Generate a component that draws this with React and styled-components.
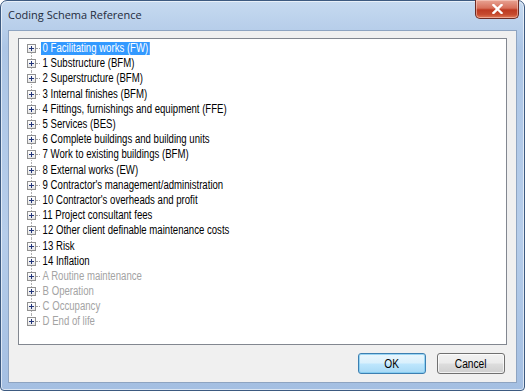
import React from 'react'
import styled, { createGlobalStyle } from 'styled-components'

const GlobalStyle = createGlobalStyle`
  html, body { margin: 0; padding: 0; background: #ffffff; }
  body { width: 525px; height: 391px; overflow: hidden; }
`

const items = [
  { label: '0 Facilitating works (FW)', selected: true },
  { label: '1 Substructure (BFM)' },
  { label: '2 Superstructure (BFM)' },
  { label: '3 Internal finishes (BFM)' },
  { label: '4 Fittings, furnishings and equipment (FFE)' },
  { label: '5 Services (BES)' },
  { label: '6 Complete buildings and building units' },
  { label: '7 Work to existing buildings (BFM)' },
  { label: '8 External works (EW)' },
  { label: "9 Contractor's management/administration" },
  { label: "10 Contractor's overheads and profit" },
  { label: '11 Project consultant fees' },
  { label: '12 Other client definable maintenance costs' },
  { label: '13 Risk' },
  { label: '14 Inflation' },
  { label: 'A Routine maintenance', disabled: true },
  { label: 'B Operation', disabled: true },
  { label: 'C Occupancy', disabled: true },
  { label: 'D End of life', disabled: true },
]

const Window = styled.div`
  width: 525px;
  height: 391px;
  box-sizing: border-box;
  display: flex;
  flex-direction: column;
  border: 1px solid #3d5a80;
  border-radius: 7px 7px 4px 4px;
  background: linear-gradient(180deg, #c6daf0 0%, #adc6e6 12%, #b6cdea 60%, #a4bfe2 100%);
  box-shadow: inset 0 0 0 1px rgba(255, 255, 255, 0.6);
  font-family: 'Liberation Sans', Arial, sans-serif;
`

const TitleBar = styled.div`
  height: 29px;
  display: flex;
  justify-content: space-between;
  align-items: flex-start;
  padding-left: 7px;
`

const Title = styled.div`
  font-family: 'Open Sans', 'Noto Sans', sans-serif;
  font-size: 11px;
  line-height: 28px;
  color: #1e2b3c;
`

const CloseButton = styled.div`
  width: 44px;
  height: 19px;
  margin-right: 5px;
  margin-top: -1px;
  box-sizing: border-box;
  border: 1px solid #6d2b23;
  border-top: none;
  border-radius: 0 0 5px 5px;
  background: linear-gradient(180deg, #e8a394 0%, #d7705b 45%, #bd3a22 55%, #c64a2e 80%, #e07a58 100%);
  box-shadow: inset 0 0 0 1px rgba(255, 220, 210, 0.5);
  display: flex;
  align-items: center;
  justify-content: center;
`

const Client = styled.div`
  flex: 1;
  margin: 0 7px 7px 7px;
  box-sizing: border-box;
  background: #f0f0f0;
  border: 1px solid #8ea4c1;
  display: flex;
  flex-direction: column;
  padding: 7px 9px 0 9px;
`

const TreeBox = styled.div`
  height: 307px;
  box-sizing: border-box;
  background: #ffffff;
  border: 1px solid #828790;
  padding-top: 2px;
`

const Row = styled.div`
  position: relative;
  height: 15.2px;
  display: flex;
  align-items: center;
  padding-left: 8px;

  &::before {
    content: '';
    position: absolute;
    left: 12px;
    top: ${({ $first }) => ($first ? '50%' : '0')};
    bottom: ${({ $last }) => ($last ? '50%' : '0')};
    border-left: 1px dotted #b0b0b0;
  }
`

const Expander = styled.div`
  position: relative;
  z-index: 1;
  width: 9px;
  height: 9px;
  box-sizing: border-box;
  border: 1px solid #919191;
  background: linear-gradient(180deg, #ffffff 0%, #e6e6e6 100%);
  display: flex;
  align-items: center;
  justify-content: center;
`

const Plus = styled.div`
  position: relative;
  width: 5px;
  height: 1px;
  background: #22357a;

  &::after {
    content: '';
    position: absolute;
    left: 2px;
    top: -2px;
    width: 1px;
    height: 5px;
    background: #22357a;
  }
`

const Connector = styled.div`
  width: 4px;
  border-top: 1px dotted #a0a0a0;
`

const Label = styled.span`
  font-size: 12px;
  line-height: 13px;
  padding: 0 2px;
  margin-left: 1px;
  white-space: nowrap;
  transform: scaleX(0.8);
  transform-origin: left center;
  color: ${({ $selected, $disabled }) => ($selected ? '#ffffff' : $disabled ? '#a3a3a3' : '#000000')};
  background: ${({ $selected }) => ($selected ? '#3399ff' : 'transparent')};
`

const Footer = styled.div`
  flex: 1;
  display: flex;
  justify-content: flex-end;
  align-items: flex-start;
  gap: 11px;
  padding-top: 8px;
  padding-right: 2px;
`

const Button = styled.div`
  width: 68px;
  height: 21px;
  box-sizing: border-box;
  border: 1px solid ${({ $default }) => ($default ? '#3c7fb1' : '#707070')};
  border-radius: 3px;
  background: ${({ $default }) =>
    $default
      ? 'linear-gradient(180deg, #eaf6fd 0%, #d9f0fc 48%, #bee6fd 52%, #a7d9f5 100%)'
      : 'linear-gradient(180deg, #f2f2f2 0%, #ebebeb 48%, #dddddd 52%, #cfcfcf 100%)'};
  box-shadow: inset 0 0 0 1px ${({ $default }) => ($default ? 'rgba(120, 200, 240, 0.7)' : 'rgba(255, 255, 255, 0.7)')};
  display: flex;
  align-items: center;
  justify-content: center;
`

const ButtonText = styled.span`
  font-size: 12px;
  transform: scaleX(0.85);
  color: #000000;
`

export default function App() {
  return (
    <>
      <GlobalStyle />
      <Window>
        <TitleBar>
          <Title>Coding Schema Reference</Title>
          <CloseButton>
            <svg width="11" height="10" viewBox="0 0 11 10">
              <path d="M1.5 1 L9.5 9 M9.5 1 L1.5 9" stroke="#ffffff" strokeWidth="2.4" strokeLinecap="square" />
            </svg>
          </CloseButton>
        </TitleBar>
        <Client>
          <TreeBox>
            {items.map((item, i) => (
              <Row key={item.label} $first={i === 0} $last={i === items.length - 1}>
                <Expander>
                  <Plus />
                </Expander>
                <Connector />
                <Label $selected={item.selected} $disabled={item.disabled}>
                  {item.label}
                </Label>
              </Row>
            ))}
          </TreeBox>
          <Footer>
            <Button $default>
              <ButtonText>OK</ButtonText>
            </Button>
            <Button>
              <ButtonText>Cancel</ButtonText>
            </Button>
          </Footer>
        </Client>
      </Window>
    </>
  )
}
